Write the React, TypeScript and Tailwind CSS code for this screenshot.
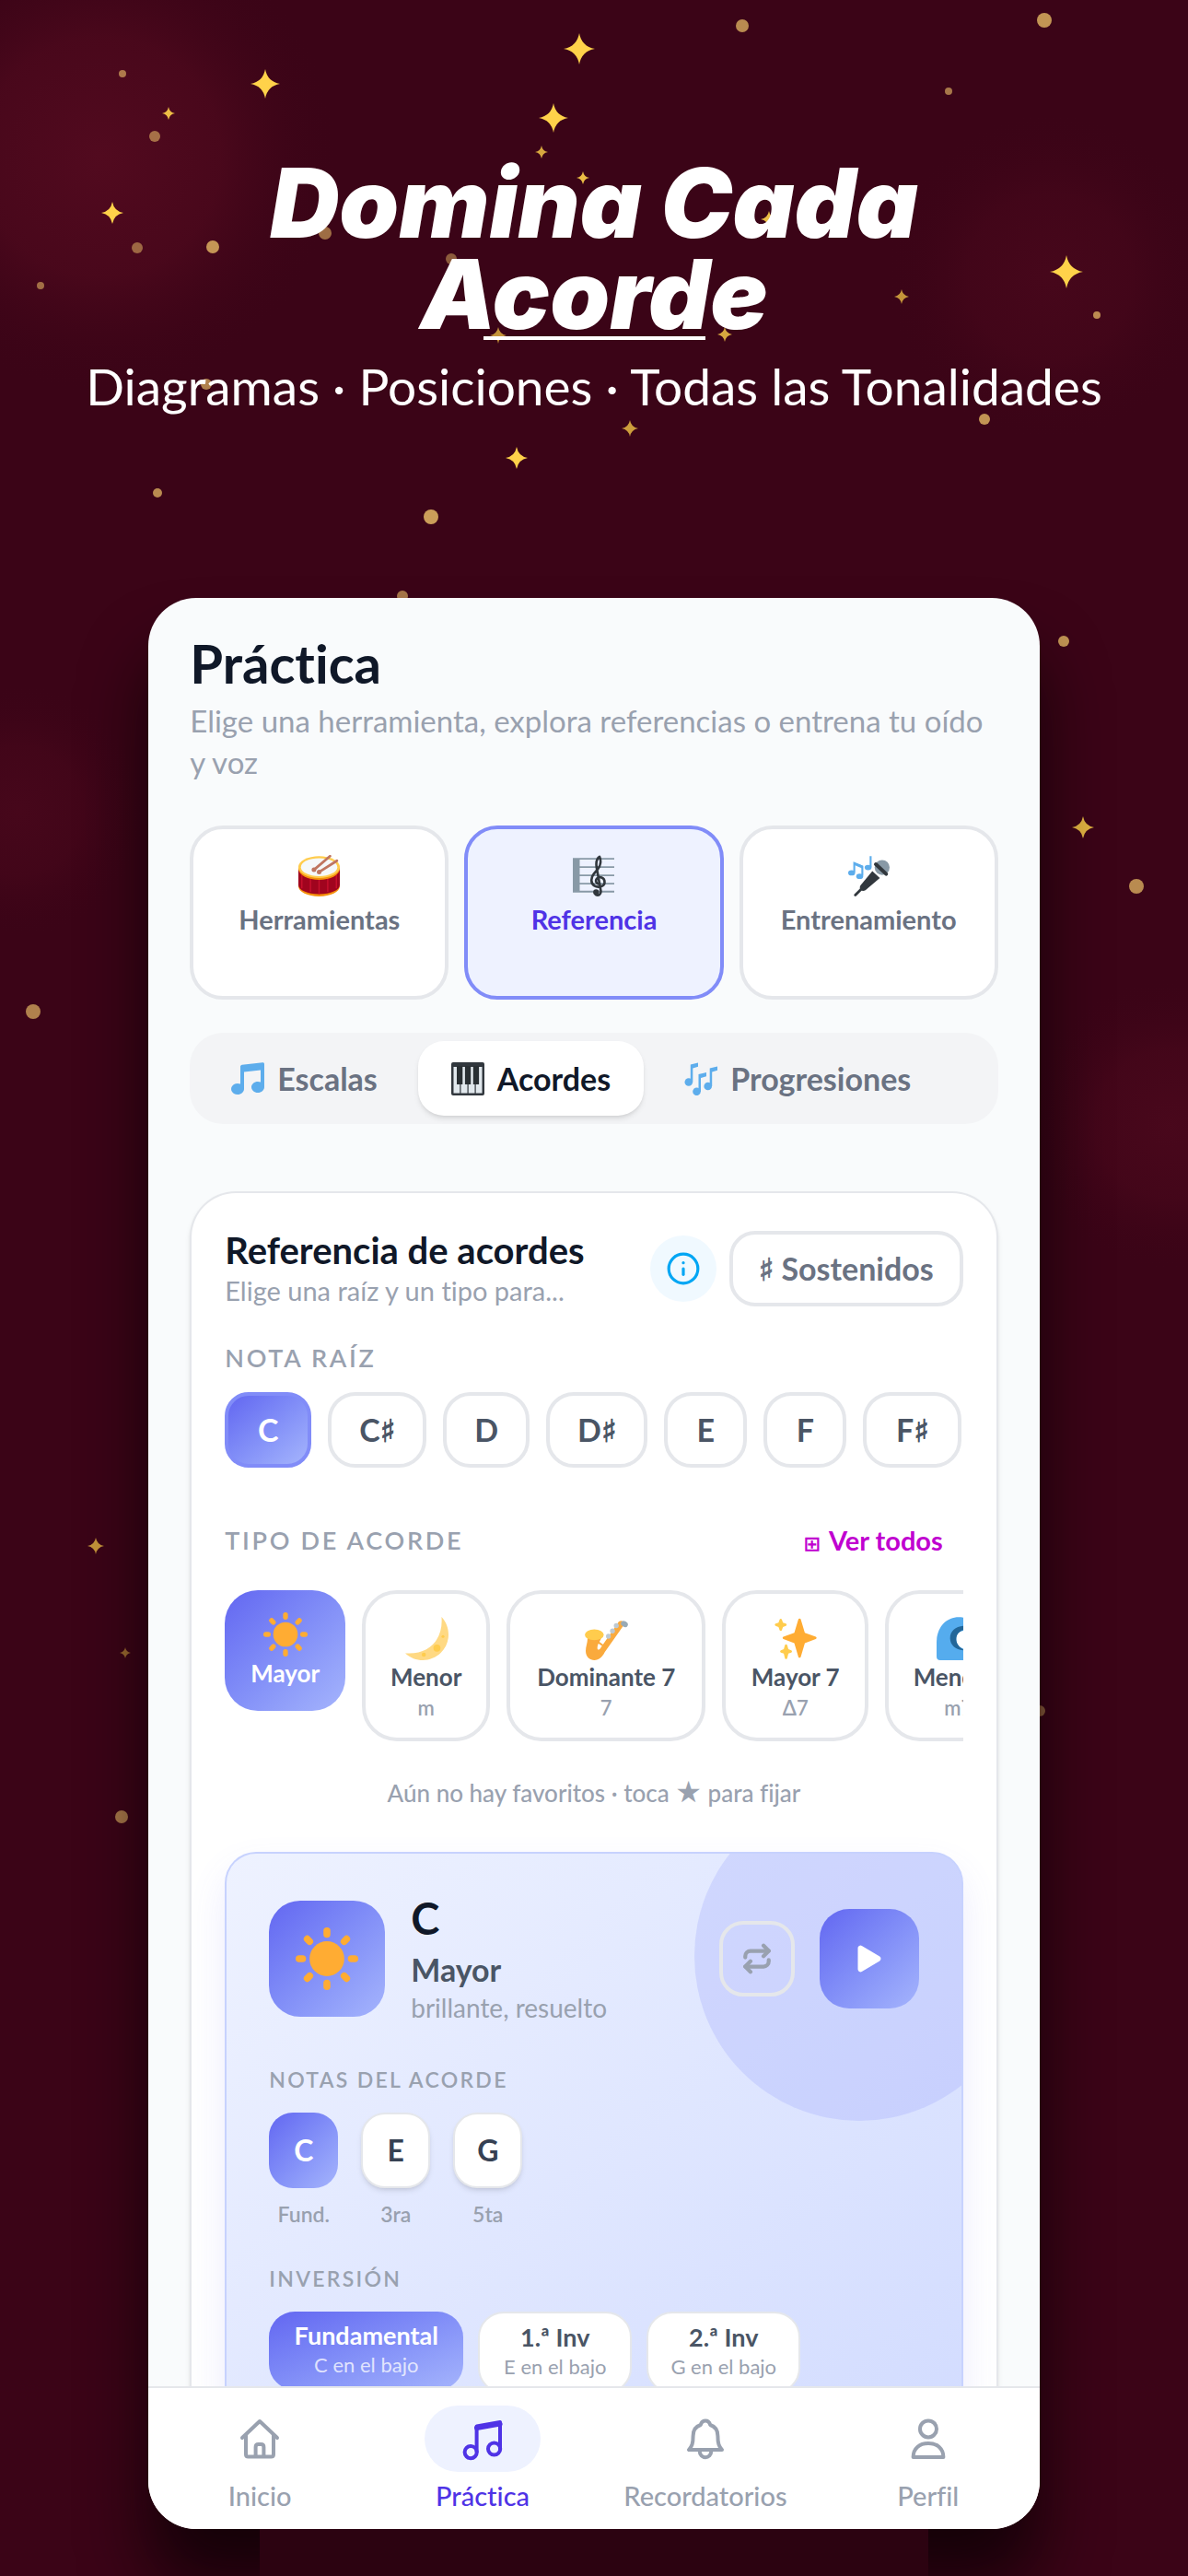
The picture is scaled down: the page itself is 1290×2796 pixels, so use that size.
import type { ReactNode } from "react";
import clsx from "clsx";
import { Info, Repeat } from "lucide-react";
import { IoPlay } from "react-icons/io5";

// [x, y, radius, opacity] on the 1290x2796 backdrop
const SPARKS = [
  [629, 53, 17, 1], [288, 91, 16, 1], [183, 123, 7, 0.9], [601, 128, 16, 1],
  [588, 165, 7, 0.8], [633, 193, 7, 0.9], [122, 231, 12, 1], [835, 238, 9, 0.9],
  [979, 322, 8, 0.7], [1158, 295, 18, 1], [541, 364, 9, 0.7], [787, 363, 8, 0.8],
  [684, 465, 9, 0.75], [561, 497, 12, 1], [1176, 898, 12, 0.85],
  [104, 1678, 9, 0.7], [136, 1794, 6, 0.5],
];

const DOTS = [
  [806, 28, 7, 0.7], [1134, 22, 8, 0.75], [133, 80, 4, 0.6], [1030, 99, 4, 0.6],
  [168, 148, 6, 0.55], [149, 269, 6, 0.5], [231, 268, 7, 0.75], [353, 253, 7, 0.55],
  [490, 281, 6, 0.45], [44, 310, 4, 0.55], [1191, 342, 4, 0.7], [224, 417, 6, 0.65],
  [1069, 455, 6, 0.75], [171, 535, 5, 0.7], [468, 561, 8, 0.8], [437, 647, 6, 0.6],
  [1155, 696, 6, 0.75], [1234, 962, 8, 0.7], [36, 1098, 8, 0.65],
  [132, 1972, 7, 0.6], [1129, 1857, 6, 0.5],
];

function spark(x: number, y: number, r: number) {
  const k = r * 0.15;
  return `M${x} ${y - r}Q${x + k} ${y - k} ${x + r} ${y}Q${x + k} ${y + k} ${x} ${y + r}Q${x - k} ${y + k} ${x - r} ${y}Q${x - k} ${y - k} ${x} ${y - r}Z`;
}

function Backdrop() {
  return (
    <svg
      className="absolute inset-0 h-full w-full"
      viewBox="0 0 1290 2796"
      preserveAspectRatio="xMidYMin slice"
      aria-hidden="true"
    >
      <defs>
        <radialGradient id="glow">
          <stop offset="0" stopColor="#520a1f" />
          <stop offset="0.5" stopColor="#4e091d" stopOpacity="0.75" />
          <stop offset="1" stopColor="#3b0417" stopOpacity="0" />
        </radialGradient>
      </defs>
      <circle cx="110" cy="170" r="260" fill="url(#glow)" />
      <circle cx="1140" cy="300" r="180" fill="url(#glow)" opacity="0.5" />
      <circle cx="20" cy="880" r="140" fill="url(#glow)" opacity="0.5" />
      <circle cx="1270" cy="1220" r="160" fill="url(#glow)" opacity="0.6" />
      {DOTS.map(([x, y, r, o]) => (
        <circle key={`${x}-${y}`} cx={x} cy={y} r={r} fill="#f0c56a" opacity={o} />
      ))}
      {SPARKS.map(([x, y, r, o]) => (
        <path key={`${x}-${y}`} d={spark(x, y, r)} fill="#ffd24a" opacity={o} />
      ))}
    </svg>
  );
}

function Emoji({ className, children }: { className: string; children: ReactNode }) {
  return (
    <svg viewBox="0 0 36 36" className={clsx("shrink-0", className)} aria-hidden="true">
      {children}
    </svg>
  );
}

function Drum({ className }: { className: string }) {
  return (
    <Emoji className={className}>
      <path d="M0 27c0 5 8 9 18 9s18-4 18-9v-3H0z" fill="#F4900C" />
      <path d="M0 12v14c0 4.500 8 8 18 8s18-3.500 18-8V12z" fill="#A0041E" />
      <path d="M10.500 20v12M18 21v13M25.500 20v12M3 17v12M33 17v12" stroke="#C8102E" strokeWidth="1.100" />
      <ellipse cx="18" cy="12" rx="18" ry="9.500" fill="#F4900C" />
      <ellipse cx="18" cy="10.500" rx="18" ry="9.500" fill="#FFCC4D" />
      <ellipse cx="18" cy="10.500" rx="15.800" ry="7.800" fill="#F5F8FA" />
      <path d="M27.500 1 14 12.500M33.500 5 18.500 14.500" stroke="#BF7560" strokeWidth="2.200" strokeLinecap="round" />
      <circle cx="13.500" cy="12.800" r="2" fill="#BF7560" />
      <circle cx="18" cy="14.800" r="2" fill="#BF7560" />
    </Emoji>
  );
}

function Score({ className }: { className: string }) {
  return (
    <Emoji className={className}>
      <path d="M0 2.500h6v30H0zM6 2.500h30V4H6zM6 9.700h30v1.500H6zM6 16.900h30v1.500H6zM6 24.100h30v1.500H6zM6 31h30v1.500H6z" fill="#8899A6" />
      <path
        d="M23.500 25.500c-3.200 0-4.200-3.200-2.600-5 2.200-2.300 6.700-.9 6.700 3 0 3.800-5.600 5.300-8.900 3.200-3.600-2.400-3-7.200-.4-10.400l3.400-4c2.400-2.900 3.100-7.300 1.500-10.800-2.600 1.700-3.100 5.900-2.500 9.500l3.600 20c.5 3.400-2.300 4.600-4.300 3.400"
        fill="none"
        stroke="#31373D"
        strokeWidth="2.100"
        strokeLinecap="round"
        strokeLinejoin="round"
      />
      <circle cx="20.200" cy="32.300" r="2.500" fill="#31373D" />
    </Emoji>
  );
}

function Mic({ className }: { className: string }) {
  return (
    <Emoji className={className}>
      <circle cx="29.500" cy="10.800" r="6.500" fill="#8899A6" />
      <path d="m24 8 9 8.500" stroke="#31373D" strokeWidth="3.200" strokeLinecap="round" />
      <path d="m21 14 6.500 6L15 30.500c-1.500 1-3 .8-4-.2s-1.200-2.600-.3-4z" fill="#31373D" />
      <path d="m11 30-4.800 4.800" stroke="#31373D" strokeWidth="2.200" strokeLinecap="round" />
      <path d="M5.300 15V7l7 3v8M19.500 10.500V1" fill="none" stroke="#5DADEC" strokeWidth="1.700" />
      <path d="M5 6.200v2.400l7.500 3.200V9.400z" fill="#5DADEC" />
      <ellipse cx="3" cy="15.500" rx="3" ry="2.300" fill="#5DADEC" />
      <ellipse cx="10" cy="18.500" rx="3" ry="2.300" fill="#5DADEC" />
      <ellipse cx="17.300" cy="10.800" rx="3" ry="2.300" fill="#5DADEC" />
    </Emoji>
  );
}

function Note({ className }: { className: string }) {
  return (
    <Emoji className={className}>
      <path
        d="M34.209.206 11.791 2.793C10.806 2.907 10 3.811 10 4.803v18.782C9.090 23.214 8.075 23 7 23c-3.865 0-7 2.685-7 6 0 3.314 3.135 6 7 6s7-2.686 7-6V10.539l18-2.077v13.124c-.91-.372-1.926-.586-3-.586-3.865 0-7 2.685-7 6 0 3.314 3.135 6 7 6s7-2.686 7-6V1.803c0-.992-.806-1.710-1.791-1.597z"
        fill="#5DADEC"
      />
    </Emoji>
  );
}

function Piano({ className }: { className: string }) {
  return (
    <Emoji className={className}>
      <rect width="36" height="36" rx="2" fill="#31373D" />
      <path d="M2.500 5h6.800v28.500H2.500zM10.500 5h7v28.500h-7zM18.700 5h6.800v28.500h-6.800zM26.700 5h6.800v28.500h-6.800z" fill="#E1E8ED" />
      <path d="M6 4h6.300v20H6zM14.900 4h6.300v20h-6.300zM23.800 4h6.300v20h-6.300z" fill="#292F33" />
    </Emoji>
  );
}

function Notes({ className }: { className: string }) {
  return (
    <Emoji className={className}>
      <g fill="#5DADEC">
        <circle cx="4.800" cy="21.500" r="4.300" />
        <path d="M6.800 2.500 15 .5v4.300l-5.700 1.700v15H6.800z" />
        <circle cx="13.500" cy="31.800" r="4.300" />
        <path d="M15.500 13 24 11v4.300l-6 1.700v15h-2.500z" />
        <circle cx="25.700" cy="26" r="4.300" />
        <path d="M27.700 6.500 36 4.500v4.300l-5.800 1.700V26h-2.500z" />
      </g>
    </Emoji>
  );
}

function Sun({ className }: { className: string }) {
  return (
    <Emoji className={className}>
      <g fill="#FFAC33">
        <circle cx="18" cy="18" r="10" />
        {[0, 45, 90, 135, 180, 225, 270, 315].map((a) => (
          <rect key={a} x="16" width="4" height="6" rx="2" transform={`rotate(${a} 18 18)`} />
        ))}
      </g>
    </Emoji>
  );
}

function Moon({ className }: { className: string }) {
  return (
    <Emoji className={className}>
      <path d="M30.312.776C32 19 20 32 .776 30.312c8.199 7.717 21.091 7.588 29.107-.429C37.900 21.867 38.030 8.975 30.312.776z" fill="#FFD983" />
      <g fill="#FFCC4D">
        <circle cx="26.600" cy="26.100" r="2.900" />
        <circle cx="15.900" cy="31.500" r="1.700" />
        <circle cx="31.500" cy="16.700" r="1.200" />
      </g>
    </Emoji>
  );
}

function Sax({ className }: { className: string }) {
  return (
    <Emoji className={className}>
      <path
        d="M2.500 16C4 20 1.500 24 1.500 28.500 1.500 33.500 5 36 8.500 36c4 0 6.500-2.500 8.500-6.500L33.500 6Q31.500 3 28.500 4.500L14 25.500c-1.500 2.500-3 2.500-3 .5 0-3.500 2.500-5.500 3.500-9z"
        fill="#FAAA3D"
      />
      <path d="m10.500 20.500 5 3.500" stroke="#FAAA3D" strokeWidth="1.600" />
      <ellipse cx="8.500" cy="15.300" rx="7.700" ry="4.400" fill="#FFCC4D" />
      <g fill="#BDC9D2">
        <circle cx="20" cy="16.500" r="2" />
        <circle cx="23.300" cy="12.200" r="2" />
        <circle cx="26.400" cy="7.900" r="2" />
      </g>
      <ellipse cx="33" cy="6.500" rx="3" ry="2.300" transform="rotate(30 33 6.500)" fill="#99AAB5" />
    </Emoji>
  );
}

function Sparkles({ className }: { className: string }) {
  return (
    <Emoji className={className}>
      <path
        d="m34.347 16.893-8.899-3.294-3.323-10.891c-.128-.42-.517-.708-.956-.708-.439 0-.828.288-.956.708l-3.322 10.891-8.900 3.294c-.393.146-.653.519-.653.938 0 .418.260.793.653.938l8.895 3.293 3.324 11.223c.126.424.516.715.959.715.442 0 .833-.291.959-.716l3.324-11.223 8.896-3.293c.391-.144.652-.518.652-.937 0-.418-.261-.792-.653-.938z"
        fill="#FFAC33"
      />
      <path
        d="m14.347 27.894-2.314-.856-.9-3.300c-.118-.436-.513-.738-.964-.738-.451 0-.846.302-.965.737l-.9 3.300-2.313.856c-.393.146-.653.520-.653.938 0 .418.260.793.653.938l2.301.853.907 3.622c.112.444.511.756.970.756.459 0 .858-.312.970-.757l.907-3.622 2.301-.853c.393-.144.653-.519.653-.937 0-.418-.260-.793-.653-.937zM10.009 6.231l-2.364-.875-.876-2.365c-.145-.393-.519-.653-.938-.653-.418 0-.792.260-.938.653l-.875 2.365-2.365.875c-.393.146-.653.520-.653.938 0 .418.260.793.653.938l2.365.875.875 2.365c.146.393.520.653.938.653.418 0 .792-.260.938-.653l.875-2.365 2.365-.875c.393-.146.653-.520.653-.938 0-.418-.260-.792-.653-.938z"
        fill="#FFCC4D"
      />
    </Emoji>
  );
}

function Wave({ className }: { className: string }) {
  return (
    <Emoji className={className}>
      <path d="M0 33V22C0 9 8 1 18 1c8 0 13 4 18 11H23c-5 0-7 3-7 7 0 5 4 8 9 8h11v6c0 2-1 3-3 3H3c-2 0-3-1-3-3z" fill="#55ACEE" />
      <path d="M33 12c-3-3-6-4-10-4-7 0-12 4-12 10s5 10 12 10c-4-2-7-5-7-9 0-5 4-8 9-8 3 0 5 0 8 1z" fill="#226699" />
    </Emoji>
  );
}

function LineIcon({ children }: { children: ReactNode }) {
  return (
    <svg
      viewBox="0 0 24 24"
      className="size-12"
      fill="none"
      stroke="currentColor"
      strokeWidth="2"
      strokeLinecap="round"
      strokeLinejoin="round"
      aria-hidden="true"
    >
      {children}
    </svg>
  );
}

const homeIcon = (
  <LineIcon>
    <path d="M2.500 11.500 12 2.500l9.500 9M4.500 10v10.500c0 .8.5 1.300 1.300 1.300h12.400c.8 0 1.300-.5 1.300-1.300V10" />
    <path d="M9.800 21.500v-5c0-.9.600-1.500 1.500-1.500h1.400c.9 0 1.500.6 1.500 1.500v5" />
  </LineIcon>
);

const notesIcon = (
  <LineIcon>
    <path d="M8.800 19V5.200L21.500 3v14.500" />
    <path d="M8.800 6.200 21.500 4" strokeWidth="2.600" />
    <circle cx="5.600" cy="19.300" r="3.300" />
    <circle cx="18.300" cy="17.500" r="3.300" />
  </LineIcon>
);

const bellIcon = (
  <LineIcon>
    <path d="M3 18h18c-1.600-1.800-2.300-3.200-2.300-7.500 0-3.300-1.600-5.200-4.100-6C14.200 3.100 13.300 2.300 12 2.300s-2.200.8-2.600 2.200c-2.500.8-4.100 2.700-4.100 6C5.300 14.800 4.600 16.200 3 18z" />
    <path d="M8.900 18.500v.5a3.100 3.100 0 0 0 6.200 0v-.5" />
  </LineIcon>
);

const personIcon = (
  <LineIcon>
    <circle cx="12" cy="6.700" r="4.500" />
    <path d="M3.800 22c0-4.800 3.400-7.500 8.200-7.500s8.200 2.700 8.200 7.500z" />
  </LineIcon>
);

function Sharp() {
  return <span className="[-webkit-text-stroke:1px]">♯</span>;
}

const SECTIONS = [
  { label: "Herramientas", icon: Drum, active: false },
  { label: "Referencia", icon: Score, active: true },
  { label: "Entrenamiento", icon: Mic, active: false },
];

const TABS = [
  { label: "Escalas", icon: Note, active: false },
  { label: "Acordes", icon: Piano, active: true },
  { label: "Progresiones", icon: Notes, active: false },
];

const ROOTS = [
  { name: "C", sharp: true, width: "w-[107px]" },
  { name: "D", sharp: false, width: "w-[94px]" },
  { name: "D", sharp: true, width: "w-[110px]" },
  { name: "E", sharp: false, width: "w-[90px]" },
  { name: "F", sharp: false, width: "w-[90px]" },
  { name: "F", sharp: true, width: "w-[107px]" },
];

const TYPES = [
  { name: "Menor", symbol: "m", icon: Moon, width: "w-[139px]" },
  { name: "Dominante 7", symbol: "7", icon: Sax, width: "w-[216px]" },
  { name: "Mayor 7", symbol: "Δ7", icon: Sparkles, width: "w-[159px]" },
  { name: "Menor 7", symbol: "m7", icon: Wave, width: "w-[159px]" },
];

const CHORD_NOTES = [
  { name: "C", degree: "Fund.", active: true },
  { name: "E", degree: "3ra", active: false },
  { name: "G", degree: "5ta", active: false },
];

const NAV = [
  { label: "Inicio", icon: homeIcon, active: false },
  { label: "Práctica", icon: notesIcon, active: true },
  { label: "Recordatorios", icon: bellIcon, active: false },
  { label: "Perfil", icon: personIcon, active: false },
];

const ACCENT = "bg-linear-to-br from-[#6366f1] to-[#a5b4fc] text-white";

function ChordDetail() {
  return (
    <section className="relative mt-12 overflow-hidden rounded-t-[34px] border-2 border-b-0 border-[#c7d2fe] bg-linear-to-br from-[#eef2ff] to-[#d0daff] px-[46px] pt-[42px] pb-40 shadow-[0_20px_40px_rgba(99,102,241,0.12)]">
      <div className="absolute -top-[68px] -right-[68px] size-[358px] rounded-full bg-[#818cf8]/20" />

      <div className="relative flex items-center">
        <div className={clsx("flex size-[126px] items-center justify-center rounded-[34px]", ACCENT)}>
          <Sun className="size-[68px]" />
        </div>
        <div className="ml-7 flex-1">
          <h3 className="text-[47px] leading-[56px] font-bold text-gray-900">C</h3>
          <p className="mt-2 text-[34px] leading-[40px] font-bold text-gray-600">Mayor</p>
          <p className="mt-[3px] text-[28px] leading-[36px] text-gray-400">brillante, resuelto</p>
        </div>
        <button
          type="button"
          aria-label="Repetir"
          className="flex size-[82px] items-center justify-center rounded-[26px] border-4 border-gray-200 text-gray-400"
        >
          <Repeat className="size-[34px]" strokeWidth={3} />
        </button>
        <button
          type="button"
          aria-label="Reproducir"
          className={clsx("ml-[27px] flex size-[108px] items-center justify-center rounded-[32px]", ACCENT)}
        >
          <IoPlay className="size-10" />
        </button>
      </div>

      <h4 className="mt-[46px] text-[23px] leading-[28px] font-semibold tracking-widest text-gray-400">
        NOTAS DEL ACORDE
      </h4>
      <div className="mt-[22px] flex gap-[25px]">
        {CHORD_NOTES.map((n) => (
          <div key={n.name} className="flex flex-col items-center">
            <div
              className={clsx(
                "flex h-[82px] w-[75px] items-center justify-center rounded-[26px] text-[32px] leading-[40px] font-bold",
                n.active ? ACCENT : "border-2 border-gray-200 bg-white text-gray-700 shadow-md",
              )}
            >
              {n.name}
            </div>
            <span className="mt-[14px] text-[23px] leading-[28px] font-semibold text-gray-400">{n.degree}</span>
          </div>
        ))}
      </div>

      <h4 className="mt-[42px] text-[23px] leading-[28px] font-semibold tracking-widest text-gray-400">INVERSIÓN</h4>
      <div className="mt-[22px] flex items-start gap-4">
        <button type="button" className={clsx("w-[211px] rounded-[28px] pt-[10px] pb-[14px]", ACCENT)}>
          <span className="block text-[27px] leading-[32px] font-bold">Fundamental</span>
          <span className="mt-[3px] block text-[22px] leading-[26px] text-white/75">C en el bajo</span>
        </button>
        {[
          ["1.ª Inv", "E en el bajo"],
          ["2.ª Inv", "G en el bajo"],
        ].map(([name, bass]) => (
          <button
            key={name}
            type="button"
            className="w-[167px] rounded-[28px] border-2 border-gray-200 bg-white pt-[10px] pb-[14px]"
          >
            <span className="block text-[27px] leading-[32px] font-bold text-gray-600">{name}</span>
            <span className="mt-[3px] block text-[22px] leading-[26px] text-gray-400">{bass}</span>
          </button>
        ))}
      </div>
    </section>
  );
}

function ChordReference() {
  return (
    <section className="mt-[73px] rounded-t-[50px] border-2 border-b-0 border-gray-200 bg-white px-9 pt-10 shadow-md">
      <div className="flex items-center">
        <div className="flex-1">
          <h2 className="text-[40px] leading-[44px] font-bold text-gray-900">Referencia de acordes</h2>
          <p className="mt-1 text-[29px] leading-[36px] text-gray-400">Elige una raíz y un tipo para...</p>
        </div>
        <button
          type="button"
          aria-label="Información"
          className="flex size-[72px] items-center justify-center rounded-full bg-sky-50 text-sky-500"
        >
          <Info className="size-[38px]" strokeWidth={2} />
        </button>
        <button
          type="button"
          className="ml-[14px] h-[82px] w-[254px] rounded-[28px] border-4 border-gray-200 text-[34px] leading-[40px] font-bold text-gray-500"
        >
          <Sharp /> Sostenidos
        </button>
      </div>

      <h3 className="mt-[39px] text-[27px] leading-[32px] font-semibold tracking-widest text-gray-400">NOTA RAÍZ</h3>
      <div className="mt-[21px] flex gap-[18px]">
        <button
          type="button"
          aria-pressed="true"
          className={clsx(
            "h-[82px] w-[94px] rounded-[26px] border-4 border-[#818cf8] text-[34px] leading-[40px] font-bold",
            ACCENT,
          )}
        >
          C
        </button>
        {ROOTS.map((r) => (
          <button
            key={r.sharp ? `${r.name}♯` : r.name}
            type="button"
            className={clsx(
              "h-[82px] rounded-[30px] border-4 border-gray-200 text-[34px] leading-[40px] font-bold text-gray-600",
              r.width,
            )}
          >
            {r.name}
            {r.sharp && <Sharp />}
          </button>
        ))}
      </div>

      <div className="mt-[63px] flex h-8 items-center justify-between pr-[22px]">
        <h3 className="text-[27px] leading-[32px] font-semibold tracking-widest text-gray-400">TIPO DE ACORDE</h3>
        <button
          type="button"
          className="flex items-baseline gap-[9px] text-[29px] leading-[32px] font-bold text-[#c000d0]"
        >
          <span className="text-[22px] leading-none">⊞</span>
          Ver todos
        </button>
      </div>

      <div className="mt-[38px] flex items-start gap-[18px] overflow-hidden">
        <button
          type="button"
          aria-pressed="true"
          className={clsx("flex size-[131px] shrink-0 flex-col items-center rounded-[36px] pt-6", ACCENT)}
        >
          <Sun className="size-12" />
          <span className="mt-[2px] text-[26px] leading-[32px] font-bold">Mayor</span>
        </button>
        {TYPES.map(({ name, symbol, icon: Icon, width }) => (
          <button
            key={name}
            type="button"
            className={clsx(
              "flex h-[164px] shrink-0 flex-col items-center rounded-[38px] border-4 border-gray-200 pt-6 whitespace-nowrap",
              width,
            )}
          >
            <Icon className="size-12" />
            <span className="mt-[2px] text-[26px] leading-[32px] font-bold text-gray-600">{name}</span>
            <span className="mt-1 text-[22px] leading-[28px] font-semibold text-gray-400">{symbol}</span>
          </button>
        ))}
      </div>

      <p className="mt-[38px] text-center text-[26px] leading-[32px] font-medium text-gray-400">
        Aún no hay favoritos · toca <span className="text-[32px] leading-none">★</span> para fijar
      </p>

      <ChordDetail />
    </section>
  );
}

export default function App() {
  return (
    <div className="relative isolate flex h-screen flex-col overflow-hidden bg-[#3b0417] font-['Lato','DejaVu_Sans',sans-serif] [font-variant-ligatures:none]">
      <Backdrop />

      <header className="relative flex flex-col items-center pt-[171px] text-center text-white">
        <h1 className="font-['Inter',sans-serif] text-[104px] leading-[99px] font-black italic">
          Domina Cada
          <br />
          Acorde
        </h1>
        <div className="-mt-1 h-1 w-[241px] bg-white" />
        <p className="mt-[15px] text-[55px] leading-[70px] whitespace-nowrap">
          Diagramas · Posiciones · Todas las Tonalidades
        </p>
      </header>

      <div className="relative mx-auto mt-[195px] mb-[51px] flex min-h-0 w-3/4 flex-1 flex-col rounded-[52px] shadow-[0_60px_70px_rgba(10,0,4,0.75)]">
        {/* lighter strip where the drop shadow thins out under the card */}
        <div className="absolute inset-x-[121px] -bottom-[60px] h-[120px] bg-[#2c0311]" />
        <div className="relative flex min-h-0 flex-1 flex-col overflow-hidden rounded-[52px] bg-[#f9fbfc]">
          <main className="min-h-0 flex-1 overflow-hidden px-[45px] pt-[39px]">
            <h1 className="text-[58px] leading-[64px] font-bold text-gray-900">Práctica</h1>
            <p className="mt-2 text-[33px] leading-[45px] text-gray-400">
              Elige una herramienta, explora referencias o entrena tu oído y voz
            </p>

            <div className="mt-[46px] grid grid-cols-3 gap-[17px]">
              {SECTIONS.map(({ label, icon: Icon, active }) => (
                <button
                  key={label}
                  type="button"
                  className={clsx(
                    "flex h-[189px] flex-col items-center rounded-[36px] border-4 pt-7 text-[29px] leading-[36px] font-bold",
                    active ? "border-[#818cf8] bg-[#eef2ff] text-[#4f33e6]" : "border-gray-200 bg-white text-gray-500",
                  )}
                >
                  <Icon className="size-[45px]" />
                  <span className="mt-[7px]">{label}</span>
                </button>
              ))}
            </div>

            <div className="mt-9 flex gap-2 rounded-[36px] bg-gray-100 p-[9px]">
              {TABS.map(({ label, icon: Icon, active }) => (
                <button
                  key={label}
                  type="button"
                  className={clsx(
                    "flex h-[81px] items-center gap-[14px] rounded-[28px] px-9 text-[34px] leading-[40px] font-bold",
                    active ? "bg-white text-gray-900 shadow-md" : "text-gray-500",
                  )}
                >
                  <Icon className="size-9" />
                  {label}
                </button>
              ))}
            </div>

            <ChordReference />
          </main>

          <nav className="grid grid-cols-4 border-t-2 border-gray-200 bg-white pt-[19px] pb-5">
            {NAV.map(({ label, icon, active }) => (
              <a
                key={label}
                href="#"
                className={clsx(
                  "flex flex-col items-center text-[29px] leading-[32px] font-medium",
                  active ? "text-[#4f33e6]" : "text-gray-400",
                )}
              >
                <span
                  className={clsx(
                    "flex h-[72px] w-[126px] items-center justify-center rounded-[36px]",
                    active && "bg-[#eef2ff]",
                  )}
                >
                  {icon}
                </span>
                <span className="mt-[10px]">{label}</span>
              </a>
            ))}
          </nav>
        </div>
      </div>
    </div>
  );
}
